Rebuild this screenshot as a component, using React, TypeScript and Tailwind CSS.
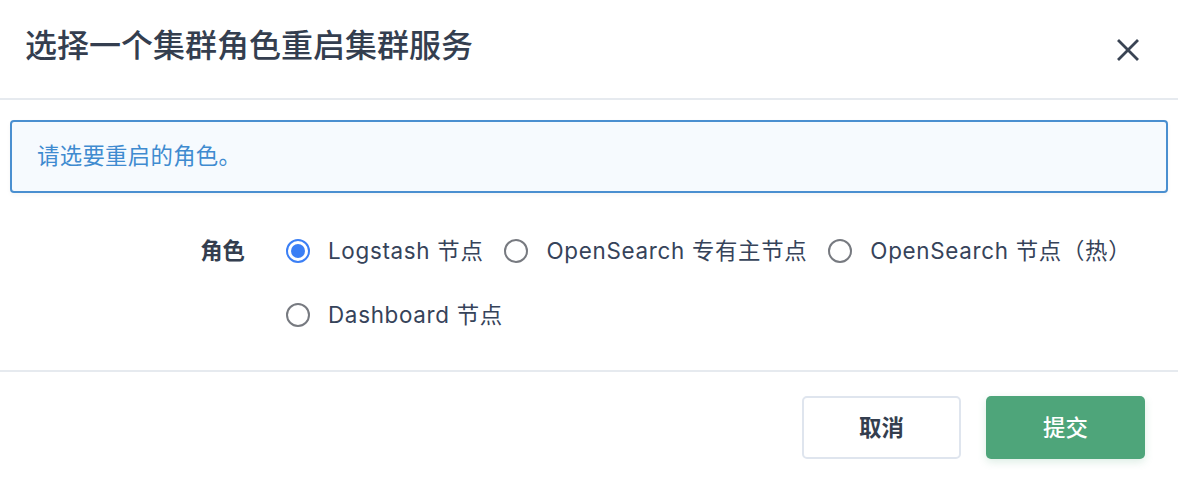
import React from "react";

const font = { fontFamily: 'Inter, "Noto Sans CJK SC", sans-serif' };

function Radio({ checked, label }: { checked?: boolean; label: string }) {
  return (
    <div className="flex items-center gap-[18px] h-[40px]">
      {checked ? (
        <span className="w-[24px] h-[24px] rounded-full border-2 border-[#3b7ff5] flex items-center justify-center">
          <span className="w-[14px] h-[14px] rounded-full bg-[#3b7ff5]" />
        </span>
      ) : (
        <span className="w-[24px] h-[24px] rounded-full border-2 border-[#777a80]" />
      )}
      <span className="text-[22.4px] tracking-[0.7px] text-[#36435a] leading-none">{label}</span>
    </div>
  );
}

export default function App() {
  return (
    <div className="w-[1178px] h-[478px] bg-white overflow-hidden" style={font}>
      <div className="h-[100px] flex items-center justify-between pl-[25px] pr-[39px] border-b-2 border-[#e6eaef]">
        <h1 className="text-[32px] leading-none font-medium text-[#343e4f] -mt-[6px]">选择一个集群角色重启集群服务</h1>
        <svg width="22" height="22" viewBox="0 0 22 22" className="mt-[2px]">
          <path d="M2 2 L20 20 M20 2 L2 20" stroke="#3a4454" strokeWidth="2.8" strokeLinecap="square" />
        </svg>
      </div>
      <div className="px-[10px] pt-[20px]">
        <div className="h-[73px] border-2 border-[#4a8fd0] rounded-[4px] bg-[#f6fafe] shadow-[0_2px_4px_rgba(0,0,0,0.04)] flex items-center pl-[25px]">
          <span className="text-[22.4px] tracking-[0.3px] text-[#3f8bd0] leading-none">请选要重启的角色。</span>
        </div>
      </div>
      <div className="flex mt-[38px]">
        <div className="w-[245px] h-[40px] flex items-center justify-end">
          <span className="text-[22.4px] font-semibold text-[#343e4f] leading-none">角色</span>
        </div>
        <div className="ml-[41px] w-[860px] flex flex-wrap gap-x-[21px] gap-y-[24px]">
          <Radio checked label="Logstash 节点" />
          <Radio label="OpenSearch 专有主节点" />
          <Radio label="OpenSearch 节点（热）" />
          <Radio label="Dashboard 节点" />
        </div>
      </div>
      <div className="mt-[35px] border-t-2 border-[#e6eaef] flex justify-end gap-[25px] pt-[24px] pr-[33px]">
        <button className="w-[159px] h-[63px] rounded-[5px] border-2 border-[#dfe5ee] bg-white text-[22.4px] font-semibold text-[#343e4f]">
          取消
        </button>
        <button className="w-[159px] h-[63px] rounded-[5px] bg-[#4ea57a] shadow-[0_3px_8px_rgba(78,165,122,0.2)] text-[22.4px] font-medium text-white">
          提交
        </button>
      </div>
    </div>
  );
}
